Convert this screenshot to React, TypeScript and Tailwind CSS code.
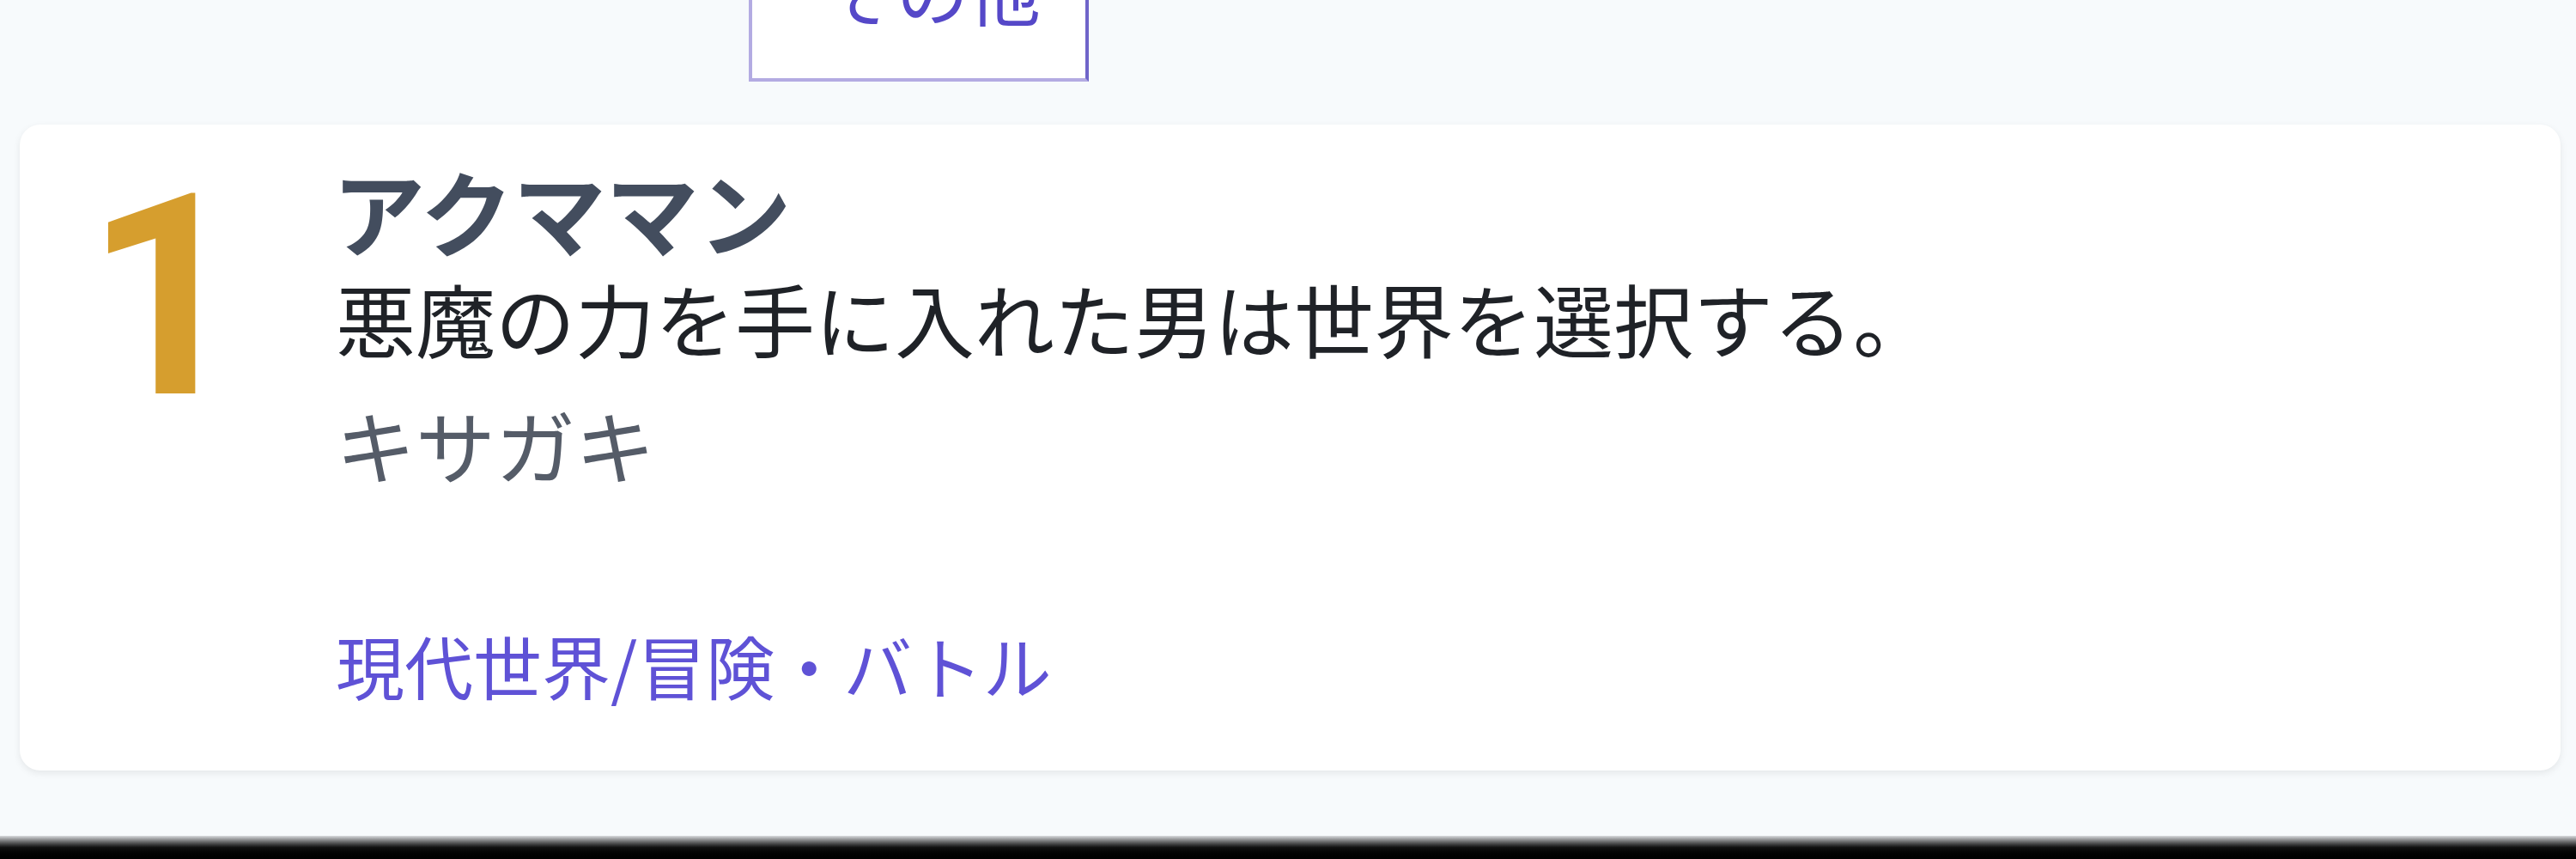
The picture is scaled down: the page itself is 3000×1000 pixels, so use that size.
import React from 'react';

const jp = "font-['Noto_Sans_CJK_JP','Noto_Sans',sans-serif]";

const ranking = [
  {
    rank: 1,
    title: 'アクママン',
    catch: '悪魔の力を手に入れた男は世界を選択する。',
    author: 'キサガキ',
    genre: '現代世界/冒険・バトル',
  },
];

export default function App() {
  return (
    <div className={`flex min-h-[1000px] flex-col bg-[#f7fafc] ${jp}`}>
      {/* Genre filter row (only the last button peeks in) */}
      <div className="h-[95px] pl-[872px]">
        <button className="-mt-[95px] flex h-[190px] w-[396px] justify-center border-[4px] border-[#b3abe2] border-r-[#6f65c9] bg-white pl-[32px] pt-[29px] text-[84px] leading-[100px] text-[#5548c8]">
          その他
        </button>
      </div>

      {/* Ranking list */}
      <div className="mt-[50px] pl-[23px] pr-[18px]">
        {ranking.map((item) => (
          <div
            key={item.rank}
            className="flex h-[752px] rounded-[24px] bg-white pl-[76px] pt-[34px] shadow-[0_3px_8px_rgba(0,0,0,0.08)]"
          >
            <div className="w-[296px] shrink-0 pt-[5px]">
              <span className="inline-block font-['Roboto',sans-serif] text-[328px] font-bold leading-[325px] text-[#d69e2e]">
                {item.rank}
              </span>
            </div>
            <div className="-ml-[4px] flex flex-col">
              <div className="-ml-[4px] text-[108px] font-bold leading-[130px] text-[#434d5e]">{item.title}</div>
              <div className="text-[93px] leading-[122px] text-[#1f2227]">{item.catch}</div>
              <div className="mt-[25px] text-[93px] leading-[122px] text-[#555c68]">{item.author}</div>
              <div className="mt-[140px] text-[80px] leading-[110px] text-[#5f52d6]">{item.genre}</div>
            </div>
          </div>
        ))}
      </div>

      {/* Bottom edge */}
      <div className="mt-auto h-[27px] bg-gradient-to-b from-[#d9dbde] via-[#111] to-black" />
    </div>
  );
}
